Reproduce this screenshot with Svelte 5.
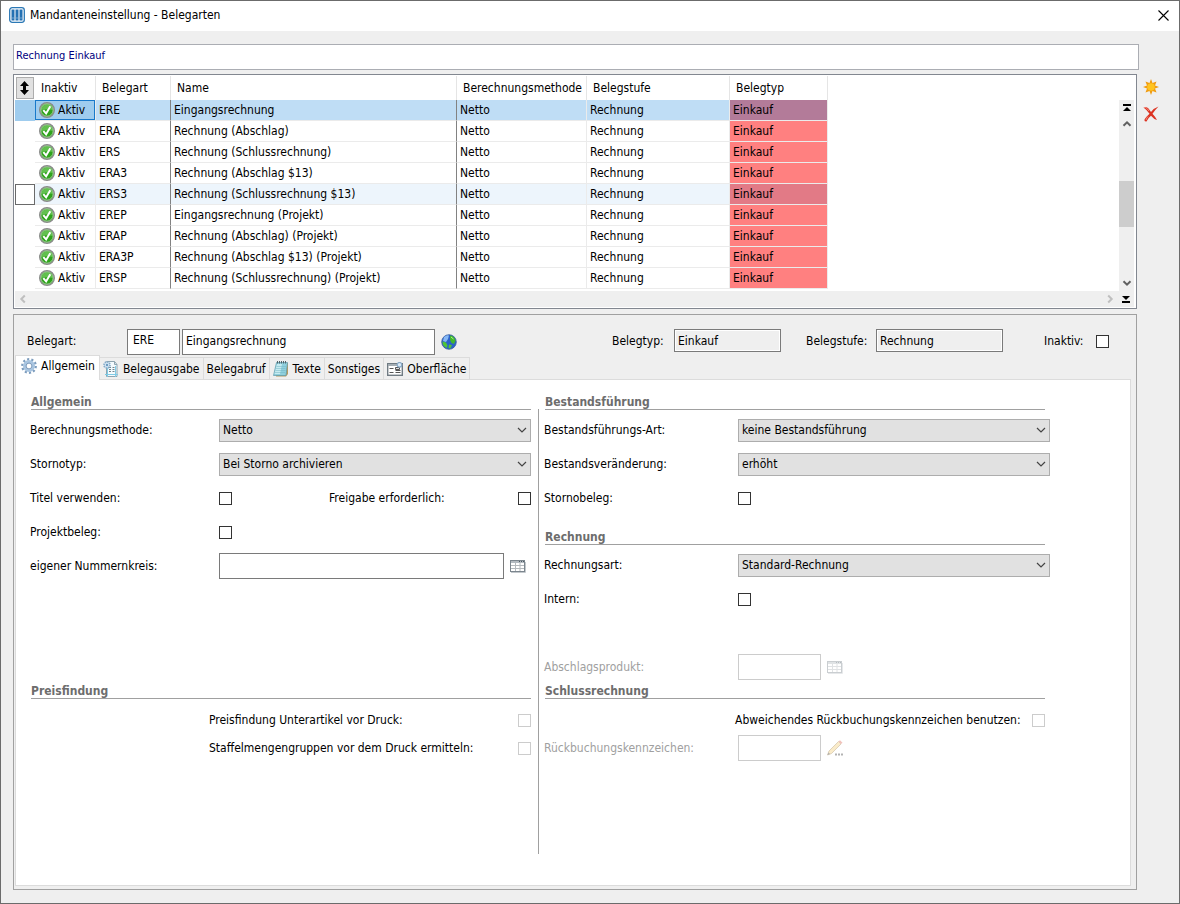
<script lang="ts">
	let rows = [
		{ code: 'ERE', name: 'Eingangsrechnung' },
		{ code: 'ERA', name: 'Rechnung (Abschlag)' },
		{ code: 'ERS', name: 'Rechnung (Schlussrechnung)' },
		{ code: 'ERA3', name: 'Rechnung (Abschlag $13)' },
		{ code: 'ERS3', name: 'Rechnung (Schlussrechnung $13)' },
		{ code: 'EREP', name: 'Eingangsrechnung (Projekt)' },
		{ code: 'ERAP', name: 'Rechnung (Abschlag) (Projekt)' },
		{ code: 'ERA3P', name: 'Rechnung (Abschlag $13) (Projekt)' },
		{ code: 'ERSP', name: 'Rechnung (Schlussrechnung) (Projekt)' }
	];
	let tabs = ['Allgemein', 'Belegausgabe', 'Belegabruf', 'Texte', 'Sonstiges', 'Oberfläche'];

	let selected = $state(0);
	let hovered = $state(4);
	let activeTab = $state('Allgemein');
</script>

{#snippet chevron(dir: string)}
	<svg class="chevron {dir}" width="10" height="10" viewBox="0 0 10 10" aria-hidden="true">
		<path d="M1.5 3.2 L5 6.7 L8.5 3.2" fill="none" stroke="currentColor" stroke-width="2" />
	</svg>
{/snippet}

{#snippet dropdown(id: string, value: string)}
	<div class="dropdown">
		<select {id}><option>{value}</option></select>
		<svg width="10" height="6" viewBox="0 0 10 6" aria-hidden="true">
			<path d="M1 1 L5 5 L9 1" fill="none" stroke="#444" stroke-width="1.2" />
		</svg>
	</div>
{/snippet}

{#snippet calendar()}
	<svg width="16" height="13" viewBox="0 0 16 13" aria-hidden="true">
		<path d="M15.5 2v10.5H1" fill="none" stroke="#c3c8cc" />
		<rect x="0.5" y="0.5" width="14" height="11" fill="#fff" stroke="#7c868e" />
		<path d="M1 1h13v2H1z" fill="#b3bac0" />
		<path d="M9 1.5h1M11 1.5h1M13 1.5h1" stroke="#4c5963" />
		<path d="M1 5.5h13M1 8.5h13M5.5 3v8M10 3v8" stroke="#b4b9bd" fill="none" />
	</svg>
{/snippet}

<main class="window">
	<header class="titlebar">
		<svg width="16" height="16" viewBox="0 0 16 16" aria-hidden="true">
			<rect x="0.7" y="0.7" width="14.6" height="14.6" rx="2.5" fill="#fff" stroke="#2b78b5" stroke-width="1.3" />
			<path d="M2.5 2.5h3v11h-3zM6.5 2.5h3v11h-3zM10.5 2.5h3v11h-3z" fill="#2471b3" />
			<path d="M4 10.500v1M8 10.500v1M12 10.500v1" stroke="#b9d6ec" />
		</svg>
		<h1>Mandanteneinstellung - Belegarten</h1>
		<button class="close" aria-label="Schließen">
			<svg width="11" height="11" viewBox="0 0 11 11"><path d="M0.5 0.5l10 10M10.5 0.5l-10 10" stroke="#000" stroke-width="1.1" /></svg>
		</button>
	</header>

	<div class="body">
		<input class="filter" type="text" value="Rechnung Einkauf" aria-label="Filter" />

		<div class="work">
			<div class="left">
				<div class="list">
					<div class="list-main">
						<div class="table-area">
							<table>
								<colgroup>
									<col class="c-mark" /><col class="c-state" /><col class="c-code" /><col class="c-name" />
									<col class="c-method" /><col class="c-level" /><col class="c-type" />
								</colgroup>
								<thead>
									<tr>
										<th class="mark">
											<button class="sort" aria-label="Sortieren">
												<svg width="9" height="14" viewBox="0 0 9 14"><path d="M4.5 0L9 5H6v4h3l-4.5 5L0 9h3V5H0z" fill="#000" /></svg>
											</button>
										</th>
										<th>Inaktiv</th>
										<th>Belegart</th>
										<th>Name</th>
										<th>Berechnungsmethode</th>
										<th>Belegstufe</th>
										<th>Belegtyp</th>
									</tr>
								</thead>
								<tbody>
									{#each rows as row, i}
										<tr class:selected={selected === i} class:hovered={hovered === i && selected !== i} onclick={() => (selected = i)}>
											<td class="mark"></td>
											<td class="state">
												<div>
													<svg width="16" height="16" viewBox="0 0 16 16" aria-hidden="true">
														<circle cx="8" cy="8" r="7.3" fill="#2fa31c" stroke="#8b8b8b" stroke-width="1.4" />
														<path d="M2.2 8a5.8 5.8 0 0 1 11.6 0q-5.8-1.5-11.6 0z" fill="#62c04f" />
														<circle cx="8" cy="8" r="6.2" fill="none" stroke="#d3dbd0" stroke-width="0.7" />
														<path d="M4.3 8.2l2.8 3.2 4.2-7.2" fill="none" stroke="#fff" stroke-width="2" />
													</svg>
													Aktiv
												</div>
											</td>
											<td class="dark">{row.code}</td>
											<td class="dark">{row.name}</td>
											<td>Netto</td>
											<td>Rechnung</td>
											<td class="type">Einkauf</td>
										</tr>
									{/each}
								</tbody>
							</table>
						</div>
						<div class="vscroll">
							<button aria-label="Zum Anfang"><svg width="8" height="8" viewBox="0 0 8 8"><path d="M0 0h8v2H0zM4 3l4 4H0z" fill="#000" /></svg></button>
							<button aria-label="Nach oben">{@render chevron('up')}</button>
							<div class="track"><div class="thumb"></div></div>
							<button aria-label="Nach unten">{@render chevron('down')}</button>
						</div>
					</div>
					<div class="hscroll">
						<button aria-label="Nach links">{@render chevron('back')}</button>
						<button class="end" aria-label="Nach rechts">{@render chevron('next')}</button>
						<button aria-label="Zum Ende"><svg width="8" height="8" viewBox="0 0 8 8"><path d="M0 6h8v2H0zM4 5l4-4H0z" fill="#000" /></svg></button>
					</div>
				</div>

				<section class="detail">
					<div class="ident">
						<label class="ident-label" for="code">Belegart:</label>
						<input id="code" class="code" type="text" value="ERE" />
						<input class="title" type="text" value="Eingangsrechnung" aria-label="Bezeichnung" />
						<button class="icon" aria-label="Übersetzungen">
							<svg width="16" height="16" viewBox="0 0 16 16">
								<circle cx="8" cy="8" r="7.3" fill="#2a62c8" stroke="#3c5f9c" stroke-width="0.8" />
								<path d="M3 3q3-2.5 5-1.5L7 5 5 8 2 7z" fill="#86b8f5" />
								<path d="M9 1.5q4 0 5.5 5L13 10l-2.500-1-1.500-3z" fill="#41b82c" />
								<path d="M1.500 7.500l3.500 1 1.500 3-1 2.500q-4-2-4-6.500zM8 10.500l3 .5L9.500 14.500l-2-.5z" fill="#4fc535" />
								<path d="M10 3l2.500 2" stroke="#b5ef8d" />
							</svg>
						</button>
						<label class="type-label" for="type">Belegtyp:</label>
						<input id="type" class="readonly type-field" type="text" value="Einkauf" readonly />
						<label class="level-label" for="level">Belegstufe:</label>
						<input id="level" class="readonly level-field" type="text" value="Rechnung" readonly />
						<label class="inactive-label" for="inactive">Inaktiv:</label>
						<input id="inactive" type="checkbox" />
					</div>

					<div class="tabs" role="tablist">
						{#each tabs as tab}
							<button role="tab" aria-selected={activeTab === tab} class:active={activeTab === tab} onclick={() => (activeTab = tab)}>
								{#if tab === 'Allgemein'}
									<svg width="16" height="16" viewBox="0 0 16 16" aria-hidden="true">
										<circle cx="8" cy="8" r="6.700" fill="none" stroke="#7c9cbd" stroke-width="2.400" stroke-dasharray="2.100 2.110" />
										<circle cx="8" cy="8" r="4.500" fill="#fff" stroke="#a9c5e0" stroke-width="3" />
										<circle cx="8" cy="8" r="2.900" fill="#fff" stroke="#6f90b3" stroke-width="0.900" />
									</svg>
								{:else if tab === 'Belegausgabe'}
									<svg width="16" height="16" viewBox="0 0 16 16" aria-hidden="true">
										<path d="M3.500 0.500h8l2.500 3v12H3.500z" fill="#f4fafd" stroke="#8ea4b0" />
										<path d="M11.500 0.500v3H14" fill="none" stroke="#8ea4b0" />
										<path d="M2 13.500h13M4.500 5v11M12.500 5v11" stroke="#7fcbe6" />
										<path d="M6 6.500h2M9.500 6.500h2M6 8.500h2M9.500 8.500h2M6 10.500h2M9.500 10.500h2" stroke="#73848e" />
										<circle cx="4" cy="4" r="3" fill="#d5e7f5" stroke="#86abc9" stroke-width="1.600" stroke-dasharray="1.500 0.800" />
										<circle cx="4" cy="4" r="1.200" fill="#6d99be" />
									</svg>
								{:else if tab === 'Texte'}
									<svg width="16" height="16" viewBox="0 0 16 16" aria-hidden="true">
										<path d="M4 2h11v11l-2 2.500H3z" fill="#b69b60" />
										<path d="M3.500 1.500h11L13 14.500H0.500z" fill="#8fd0dd" stroke="#5e9aaa" stroke-width="0.700" />
										<path d="M4 3h5L7 13H1.500z" fill="#c6ebf1" />
										<path d="M3.500 5.500h9.500M3 7.500h9.500M2.500 9.500h10M2 11.500h10" stroke="#73b4c2" stroke-width="0.500" />
										<path d="M4.500 0v2.500M6.500 0v2.500M8.500 0v2.500M10.500 0v2.500M12.500 0v2.500" stroke="#52666c" />
									</svg>
								{:else if tab === 'Oberfläche'}
									<svg width="16" height="14" viewBox="0 0 16 14" aria-hidden="true">
										<rect x="0.700" y="1.700" width="14.600" height="11.600" fill="#fff" stroke="#707b83" stroke-width="1.400" />
										<path d="M1 2h9v2H1z" fill="#a4adb3" />
										<path d="M2.500 6.500h4M2.500 10.500h4M8.500 8.500h5M8.500 10.500h5" stroke="#555" />
										<path d="M8.500 5.500h4v2h-4z" fill="#ddd" stroke="#555" />
										<circle cx="12.500" cy="2.800" r="2.300" fill="#dceaf6" stroke="#88a9c7" stroke-width="1.200" />
									</svg>
								{/if}
								{tab}
							</button>
						{/each}
					</div>

					<div class="pane">
						<div class="column">
							<section class="upper">
								<h2>Allgemein</h2>
								<div class="row"><label for="method">Berechnungsmethode:</label>{@render dropdown('method', 'Netto')}</div>
								<div class="row"><label for="cancel">Stornotyp:</label>{@render dropdown('cancel', 'Bei Storno archivieren')}</div>
								<div class="row">
									<label for="use-title">Titel verwenden:</label>
									<input id="use-title" type="checkbox" />
									<label class="second" for="release">Freigabe erforderlich:</label>
									<input id="release" class="end" type="checkbox" />
								</div>
								<div class="row"><label for="project">Projektbeleg:</label><input id="project" type="checkbox" /></div>
								<div class="row">
									<label for="range">eigener Nummernkreis:</label>
									<input id="range" class="wide" type="text" />
									<button class="icon" aria-label="Nummernkreis wählen">{@render calendar()}</button>
								</div>
							</section>
							<section class="lower">
								<h2>Preisfindung</h2>
								<div class="row indent">
									<label for="sub">Preisfindung Unterartikel vor Druck:</label>
									<input id="sub" class="end" type="checkbox" disabled />
								</div>
								<div class="row indent">
									<label for="scale">Staffelmengengruppen vor dem Druck ermitteln:</label>
									<input id="scale" class="end" type="checkbox" disabled />
								</div>
							</section>
						</div>

						<div class="divider"></div>

						<div class="column right">
							<div class="upper">
								<section>
									<h2>Bestandsführung</h2>
									<div class="row"><label for="stock">Bestandsführungs-Art:</label>{@render dropdown('stock', 'keine Bestandsführung')}</div>
									<div class="row"><label for="change">Bestandsveränderung:</label>{@render dropdown('change', 'erhöht')}</div>
									<div class="row"><label for="reversal">Stornobeleg:</label><input id="reversal" type="checkbox" /></div>
								</section>
								<section class="invoice">
									<h2>Rechnung</h2>
									<div class="row"><label for="kind">Rechnungsart:</label>{@render dropdown('kind', 'Standard-Rechnung')}</div>
									<div class="row"><label for="intern">Intern:</label><input id="intern" type="checkbox" /></div>
									<div class="row"></div>
									<div class="row off">
										<label for="product">Abschlagsprodukt:</label>
										<input id="product" class="short" type="text" disabled />
										<button class="icon" disabled aria-label="Produkt wählen">{@render calendar()}</button>
									</div>
								</section>
							</div>
							<section class="lower">
								<h2>Schlussrechnung</h2>
								<div class="row indent">
									<label for="differing">Abweichendes Rückbuchungskennzeichen benutzen:</label>
									<input id="differing" class="end" type="checkbox" disabled />
								</div>
								<div class="row off">
									<label for="flag">Rückbuchungskennzeichen:</label>
									<input id="flag" class="short" type="text" disabled />
									<button class="icon" disabled aria-label="Kennzeichen bearbeiten">
										<svg width="16" height="16" viewBox="0 0 16 16">
											<path d="M0.500 15l1.500-4L11.500 1.500l2.500 2.500L4.500 13.500z" fill="#f3cf7a" stroke="#9c7a3c" stroke-width="0.800" />
											<path d="M11.500 1.500l1.500-1.200 2.500 2.500L14 4z" fill="#e0685a" />
											<path d="M0.500 15l1-2.500 1.500 1.500z" fill="#333" />
											<path d="M8 14.500h2M11 14.500h2M14 14.500h2" stroke="#444" stroke-width="2" />
										</svg>
									</button>
								</div>
							</section>
						</div>
					</div>
				</section>
			</div>

			<div class="tools">
				<button class="icon" aria-label="Neu">
					<svg width="16" height="16" viewBox="0 0 16 16">
						<path d="M8 0l1.500 4L13.500 2.500 12 6.500 16 8l-4 1.500L13.500 13.500 9.500 12 8 16l-1.500-4L2.500 13.500 4 9.500 0 8l4-1.500L2.500 2.500 6.500 4z" fill="#f09c10" />
						<circle cx="8" cy="8" r="3.800" fill="#ffc41f" />
					</svg>
				</button>
				<button class="icon" aria-label="Löschen">
					<svg width="16" height="16" viewBox="0 0 16 16">
						<path d="M0.500 1.500Q3.500 0 5.500 2.500L8 6Q11 2 15.500 0.500Q12 4 9.500 7.800Q12 10.500 14 14Q11 13.500 8 9.800Q5 12 3.500 15.500Q1 16 1.500 13.500Q3.500 10.500 6.500 7.800Q4 4 0.500 1.500z" fill="#dc3322" />
						<path d="M1 1.500Q3 1 4.500 3L6 5M3 14q0.500-2 2-3.500" fill="none" stroke="#f58a7c" />
					</svg>
				</button>
			</div>
		</div>
	</div>
</main>

<style>
	:global(body) {
		margin: 0;
	}

	.window,
	.window input,
	.window select,
	.window button {
		font-family: 'DejaVu Sans Condensed', 'Open Sans', sans-serif;
		font-size: 12px;
		color: #000;
	}

	.window,
	.window * {
		box-sizing: border-box;
	}

	.window {
		display: flex;
		flex-direction: column;
		min-height: 100vh;
		border: 1px solid #6b6b6b;
		background: #efefef;
		line-height: 16px;
	}

	button {
		display: flex;
		align-items: center;
		justify-content: center;
		padding: 0;
		border: none;
		background: none;
	}

	svg {
		display: block;
		flex: none;
	}

	input[type='text'] {
		height: 26px;
		padding: 0 3px 2px;
		border: 1px solid #7a7a7a;
		border-radius: 0;
		background: #fff;
		outline: none;
	}

	input[type='checkbox'] {
		appearance: none;
		flex: none;
		width: 13px;
		height: 13px;
		margin: 0;
		border: 1px solid #333;
		background: #fff;
	}

	input[type='checkbox']:disabled,
	input[type='text']:disabled {
		border-color: #ccc;
	}

	.titlebar {
		display: flex;
		align-items: center;
		height: 30px;
		padding: 0 10px 2px 8px;
		gap: 5px;
		background: #fff;
	}

	h1 {
		flex: 1;
		margin: 0;
		font-size: 12px;
		font-weight: 400;
	}

	.body {
		display: flex;
		flex: 1;
		flex-direction: column;
		gap: 4px;
		padding: 13px 0 13px 12px;
	}

	.window .filter {
		margin-right: 40px;
		padding: 0 2px 4px;
		border-color: #abadb3;
		color: #000080;
		font-size: 11px;
	}

	.work {
		display: flex;
		flex: 1;
	}

	.left {
		display: flex;
		flex: 1;
		flex-direction: column;
		gap: 5px;
		min-width: 0;
	}

	.tools {
		display: flex;
		flex-direction: column;
		align-items: flex-start;
		gap: 11px;
		width: 42px;
		padding: 5px 6px;
	}

	/* list of document types */

	.list {
		padding: 1px 2px 1px 1px;
		border: 1px solid #828790;
		background: #fff;
	}

	.list-main {
		display: flex;
		height: 215px;
	}

	.table-area {
		flex: 1;
		overflow: hidden;
	}

	table {
		width: 813px;
		table-layout: fixed;
		border-collapse: separate;
		border-spacing: 0;
	}

	.c-mark {
		width: 20px;
	}

	.c-state {
		width: 61px;
	}

	.c-code {
		width: 75px;
	}

	.c-name {
		width: 286px;
	}

	.c-method {
		width: 130px;
	}

	.c-level {
		width: 143px;
	}

	.c-type {
		width: 98px;
	}

	th {
		height: 24px;
		padding: 0 0 0 6px;
		border-right: 1px solid #e5e5e5;
		font-weight: 400;
		text-align: left;
		white-space: nowrap;
	}

	th.mark {
		padding: 1px;
		border: none;
	}

	.sort {
		width: 18px;
		height: 22px;
		padding-right: 1px;
		border: 1px solid #adadad;
		background: #e1e1e1;
	}

	td {
		height: 21px;
		padding: 0 3px;
		border-right: 1px solid #ebebeb;
		border-bottom: 1px solid #ebebeb;
		white-space: nowrap;
	}

	td.mark {
		padding: 0;
		border: none;
	}

	td.dark {
		border-right-color: #828282;
	}

	td.state {
		padding: 0;
	}

	td.state div {
		display: flex;
		align-items: center;
		gap: 3px;
		height: 20px;
		padding-left: 4px;
	}

	td.type {
		background: #ff8080;
	}

	.selected td {
		background: #bfddf5;
	}

	.selected td.mark,
	.selected td.state {
		background: #9fccee;
	}

	.selected td.state div {
		padding-left: 3px;
		border: 1px solid #1979ca;
	}

	.selected td.type {
		background: #b37b99;
	}

	.hovered td {
		background: #edf5fc;
	}

	.hovered td.mark {
		border: 1px solid #6a6a6a;
		background: #fff;
	}

	.hovered td.type {
		background: #e27a86;
	}

	.vscroll {
		display: flex;
		flex-direction: column;
		width: 15px;
		margin-top: 24px;
		background: #efefef;
	}

	.vscroll button,
	.hscroll button {
		width: 16px;
		height: 16px;
	}

	.track {
		flex: 1;
		padding-top: 49px;
	}

	.thumb {
		height: 46px;
		background: #cdcdcd;
	}

	.hscroll {
		display: flex;
		height: 16px;
		background: #efefef;
	}

	.hscroll .end {
		margin-left: auto;
	}

	.chevron {
		color: #606060;
	}

	.up {
		transform: rotate(180deg);
	}

	.back {
		color: #bfbfbf;
		transform: rotate(90deg);
	}

	.next {
		color: #bfbfbf;
		transform: rotate(-90deg);
	}

	/* detail form */

	.detail {
		display: flex;
		flex: 1;
		flex-direction: column;
		padding: 0 5px 3px 1px;
		border: 1px solid #a0a0a0;
	}

	.ident {
		display: flex;
		align-items: flex-start;
		height: 40px;
		padding: 14px 0 0 12px;
	}

	.ident label {
		line-height: 24px;
	}

	.ident-label {
		width: 100px;
	}

	.window .code {
		width: 53px;
		margin-right: 2px;
		padding: 0 5px 4px;
	}

	.title {
		width: 253px;
		margin-right: 6px;
	}

	.ident .icon {
		height: 26px;
	}

	.type-label {
		width: 62px;
		margin-left: 155px;
	}

	.level-label {
		width: 70px;
		margin-left: 25px;
	}

	.inactive-label {
		width: 52px;
		margin-left: 41px;
	}

	.ident input[type='checkbox'] {
		margin-top: 6px;
	}

	.window .readonly {
		height: 23px;
		padding-bottom: 0;
		background: #efefef;
		box-shadow: inset 0 0 0 1px #fff;
	}

	.type-field {
		width: 107px;
	}

	.level-field {
		width: 127px;
	}

	.tabs {
		display: flex;
		align-items: flex-end;
		height: 25px;
		margin-bottom: -1px;
	}

	.tabs button {
		gap: 4px;
		height: 23px;
		padding: 0 3px;
		border: 1px solid #dcdcdc;
		border-left: none;
	}

	.tabs .active {
		position: relative;
		height: 25px;
		padding: 0 4px 4px 5px;
		border-bottom: none;
		border-left: 1px solid #dcdcdc;
		background: #fff;
	}

	.pane {
		display: flex;
		flex: 1;
		padding: 16px 14px 0 14px;
		border: 1px solid #dcdcdc;
		background: #fff;
	}

	.column {
		width: 501px;
	}

	.column.right {
		width: 506px;
	}

	.divider {
		width: 1px;
		margin: 13px 5px 31px 7px;
		background: #a0a0a0;
	}

	.upper {
		min-height: 289px;
	}

	.invoice {
		padding-top: 16px;
	}

	h2 {
		height: 14px;
		margin: 0 0 3px 1px;
		border-bottom: 1px solid #a0a0a0;
		color: #6d6d6d;
		font-size: 12px;
		font-weight: 700;
		line-height: 12px;
	}

	.right h2 {
		margin-right: 5px;
	}

	.row {
		display: flex;
		align-items: center;
		height: 34px;
	}

	.row label {
		width: 189px;
		white-space: nowrap;
	}

	.right .row label {
		width: 194px;
	}

	.row .second {
		margin-left: 97px;
	}

	.row .icon {
		margin-left: 6px;
	}

	.row .end {
		margin-left: auto;
	}

	.row .wide {
		width: 285px;
	}

	.row .short {
		width: 83px;
	}

	.window .row .second,
	.window .indent label {
		width: auto;
	}

	.lower h2 {
		margin-bottom: 7px;
	}

	.lower .row {
		height: 28px;
	}

	.indent {
		padding-left: 179px;
	}

	.right .indent {
		padding: 0 5px 0 191px;
	}

	.off label {
		color: #a0a0a0;
	}

	.off .icon {
		opacity: 0.4;
	}

	.dropdown {
		display: grid;
		align-items: center;
		width: 312px;
	}

	.dropdown select,
	.dropdown svg {
		grid-area: 1 / 1;
	}

	.dropdown svg {
		justify-self: end;
		margin-right: 4px;
		pointer-events: none;
	}

	select {
		appearance: none;
		width: 100%;
		height: 23px;
		padding: 0 3px;
		border: 1px solid #adadad;
		border-radius: 0;
		background: #e1e1e1;
	}
</style>
